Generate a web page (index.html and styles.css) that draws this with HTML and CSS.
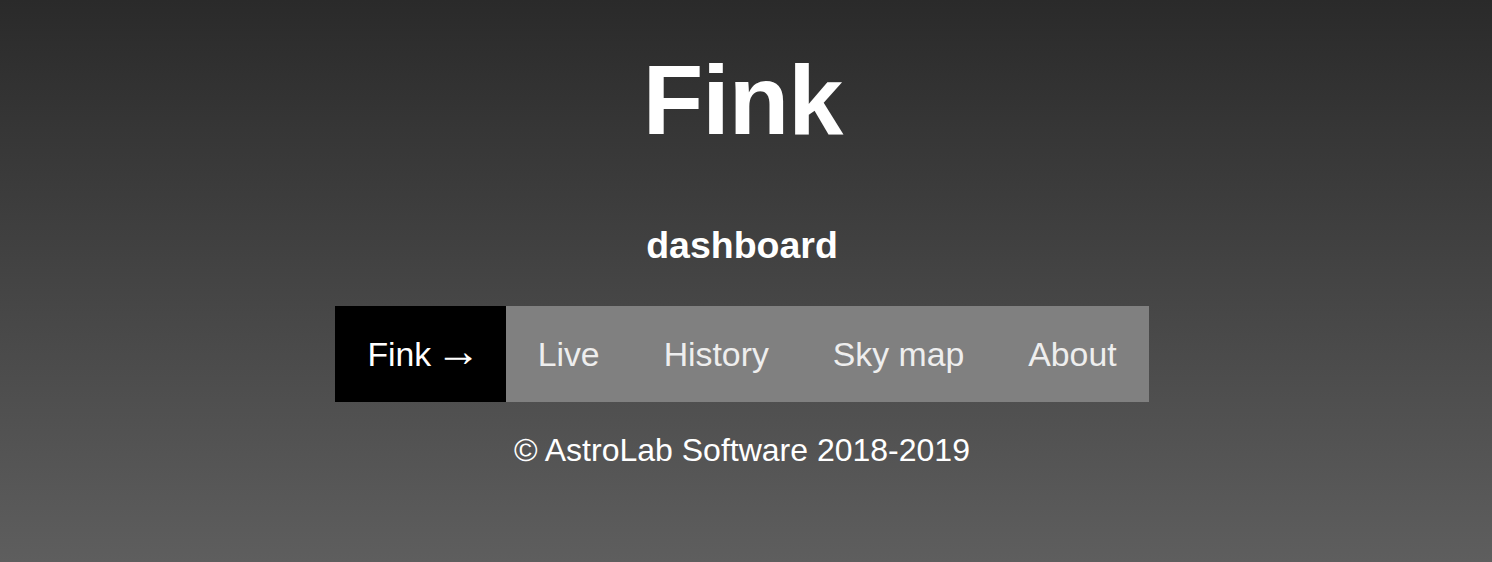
FILE: index.html
```html
<!DOCTYPE html>
<html lang="en">
<head>
<meta charset="utf-8">
<title>Fink dashboard</title>
<link rel="stylesheet" href="styles.css">
</head>
<body>
<div class="page">
  <h1 class="title">Fink</h1>
  <h2 class="subtitle">dashboard</h2>
  <nav class="menu">
    <a class="menu-item menu-item--home" href="#">Fink <span class="arrow">→</span></a>
    <a class="menu-item" href="#">Live</a>
    <a class="menu-item" href="#">History</a>
    <a class="menu-item" href="#">Sky map</a>
    <a class="menu-item" href="#">About</a>
  </nav>
  <footer class="footer">© AstroLab Software 2018-2019</footer>
</div>
</body>
</html>
```
FILE: styles.css
```css
html, body {
  margin: 0;
  padding: 0;
  height: 100%;
}
body {
  background: linear-gradient(to bottom, #2a2a2a 0%, #5e5e5e 100%);
  font-family: "Liberation Sans", Arial, Helvetica, sans-serif;
  color: #ffffff;
}
.page {
  display: flex;
  flex-direction: column;
  align-items: center;
  padding: 50px 8px 0 0;
  box-sizing: border-box;
  min-height: 100%;
}
.title {
  margin: 0;
  padding-left: 1px;
  font-size: 99px;
  line-height: 99px;
  letter-spacing: -1px;
  font-weight: bold;
  color: #ffffff;
}
.subtitle {
  margin: 78px 0 0;
  font-size: 37.5px;
  line-height: 37.5px;
  font-weight: bold;
  color: #ffffff;
}
.menu {
  display: flex;
  margin-top: 41.5px;
  background: #808080;
}
.menu-item {
  display: block;
  padding: 32px;
  font-size: 33.8px;
  line-height: 32px;
  height: 32px;
  color: #eeeeee;
  text-decoration: none;
  white-space: nowrap;
}
.menu-item--home {
  background: #000000;
  color: #ffffff;
}
.arrow {
  display: inline-block;
  margin: 0 -7px 0 -5px;
  font-size: 45px;
  line-height: 0;
}
.footer {
  margin-top: 32px;
  font-size: 32px;
  line-height: 32px;
  color: #ffffff;
}
```
